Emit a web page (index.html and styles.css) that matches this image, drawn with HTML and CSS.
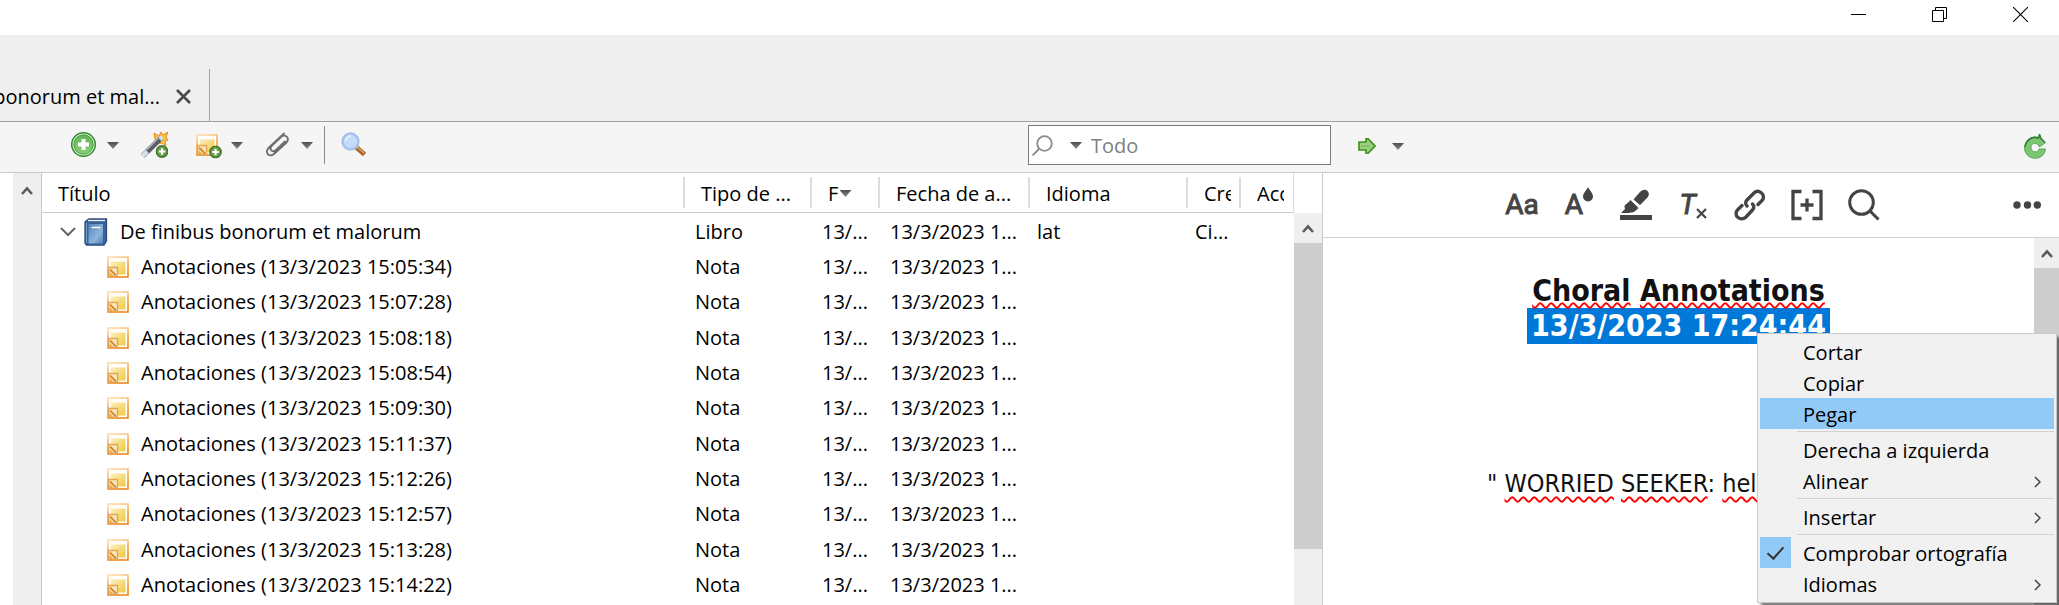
FILE: index.html
```html
<!DOCTYPE html>
<html lang="es">
<head>
<meta charset="utf-8">
<title>De finibus bonorum et malorum</title>
<link rel="stylesheet" href="styles.css">
</head>
<body>
<svg class="defs" aria-hidden="true">
  <defs>
    <linearGradient id="g-note" x1="0" y1="0" x2="1" y2="1"><stop offset="0" stop-color="#fbefc2"/><stop offset="1" stop-color="#efc93c"/></linearGradient>
    <linearGradient id="g-edge" x1="0.2" y1="0" x2="0.5" y2="1"><stop offset="0" stop-color="#fbdcae"/><stop offset="0.5" stop-color="#f6a545"/><stop offset="1" stop-color="#f0861a"/></linearGradient>
    <linearGradient id="g-book" x1="0" y1="0" x2="1" y2="1"><stop offset="0" stop-color="#4f82b8"/><stop offset="0.6" stop-color="#8db4dd"/><stop offset="1" stop-color="#4d7fb8"/></linearGradient>
    <linearGradient id="g-green" x1="0" y1="0" x2="0" y2="1"><stop offset="0" stop-color="#63b558"/><stop offset="1" stop-color="#86d072"/></linearGradient>
    <linearGradient id="g-caret" x1="0" y1="0" x2="0" y2="1"><stop offset="0" stop-color="#4e4e4e"/><stop offset="1" stop-color="#8a8a8a"/></linearGradient>
    <symbol id="i-note" viewBox="0 0 22 22">
      <rect x="1" y="1" width="20" height="20" fill="#fffdf8" stroke="url(#g-edge)" stroke-width="1.600"/>
      <rect x="4" y="5.500" width="14.500" height="13" fill="url(#g-note)"/>
      <path d="M1.500 11.500H10.500V20.500H1.500z" fill="#fbe6bb" stroke="#e5a450" stroke-width="1.300"/>
      <path d="M3 13.500l6 6" stroke="#d08a34" stroke-width="1.800"/>
      <path d="M2.500 16l4 4h-4z" fill="#e9a84e"/>
    </symbol>
    <symbol id="i-plus" viewBox="0 0 12 12">
      <circle cx="6" cy="6" r="5.300" fill="#6a9d48" stroke="#3d742a" stroke-width="1.200"/>
      <path d="M6 3v6M3 6h6" stroke="#fff" stroke-width="2"/>
    </symbol>
    <symbol id="i-caret" viewBox="0 0 12 7"><path d="M0 0h12L6 7z" fill="url(#g-caret)"/></symbol>
    <symbol id="i-up" viewBox="0 0 12 9"><path d="M1 8l5-5.500L11 8" fill="none" stroke="#5a5a5a" stroke-width="2.600"/></symbol>
    <symbol id="i-sub" viewBox="0 0 7 12"><path d="M1 1l5 5-5 5" fill="none" stroke="#444" stroke-width="1.500"/></symbol>
  </defs>
</svg>

<header class="titlebar">
  <button aria-label="Minimizar"><svg width="15" height="15"><path d="M0 7.500h15" stroke="#000"/></svg></button>
  <button aria-label="Restaurar"><svg width="15" height="15"><path d="M3.500 3V.5h11v11H12M.5 3.500h11v11H.5z" fill="none" stroke="#000"/></svg></button>
  <button aria-label="Cerrar"><svg width="15" height="15"><path d="M0 0l15 15M15 0L0 15" stroke="#000" stroke-width="1.100"/></svg></button>
</header>

<nav class="tabs">
  <div class="tab">
    <span class="tab-name">bonorum et mal...</span>
    <button aria-label="Cerrar pestaña"><svg width="15" height="15"><path d="M1 1l13 13M14 1L1 14" stroke="#4a4a4a" stroke-width="2.600"/></svg></button>
  </div>
</nav>

<div class="toolbar">
  <div class="tools-left">
    <button class="split" aria-label="Nuevo elemento">
      <svg width="28" height="28" viewBox="0 0 28 28"><circle cx="13.500" cy="13.500" r="11.800" fill="#dff3da" stroke="#2f8a2c" stroke-width="1.500"/><circle cx="13.500" cy="13.500" r="9.700" fill="url(#g-green)" stroke="#43993c"/><path d="M13.500 8v11M8 13.500h11" stroke="#fff" stroke-width="4"/></svg>
      <svg width="12" height="7"><use href="#i-caret"/></svg>
    </button>
    <button class="wand" aria-label="Añadir por identificador">
      <svg width="28" height="28" viewBox="0 0 28 28"><path d="M14 2l5 3 2-4 2 3 5-3-2 5 2 3-3 1 1 5-4-3-4 1-2-4-1-1z" fill="#fbc23d" stroke="#ef8b1c"/><path d="M2.500 25L22 6" stroke="#96a5b0" stroke-width="5.500"/><path d="M7.500 20.500L19.500 8.500" stroke="#5c5d61" stroke-width="4.800"/><path d="M2.500 25L7 20.500M20 8l2.200-2.200" stroke="#d3e2ec" stroke-width="4"/><path d="M6.500 19L18 7.500" stroke="#b5b8bb" stroke-width="1.200"/><use href="#i-plus" x="15.500" y="14" width="13" height="13"/></svg>
    </button>
    <button class="split add-note" aria-label="Nueva nota">
      <svg width="28" height="28" viewBox="0 0 28 28"><use href="#i-note" x="2" y="3" width="22" height="22"/><use href="#i-plus" x="15" y="14.500" width="13" height="13"/></svg>
      <svg width="12" height="7"><use href="#i-caret"/></svg>
    </button>
    <button class="split" aria-label="Añadir adjunto">
      <svg width="28" height="28" viewBox="0 0 28 28" fill="none" stroke="#6e6e6e" stroke-width="1.900" stroke-linecap="round"><path d="M20 2.500L5 16.500C-.5 22 6 27 10.500 22.500L22 12c5-5-1-9.500-5-6L8 14.500c-4 4.500 1 7.500 4 4.500l9-8.500"/></svg>
      <svg width="12" height="7"><use href="#i-caret"/></svg>
    </button>
    <span class="rule"></span>
    <button class="find" aria-label="Búsqueda avanzada">
      <svg width="28" height="28" viewBox="0 0 28 28"><path d="M17 16l8.500 7.500" stroke="#a8682c" stroke-width="5"/><path d="M18 16l7 6" stroke="#dba868" stroke-width="1.500"/><circle cx="11.500" cy="10.500" r="8" fill="#c3dcfa" stroke="#a4c1ec" stroke-width="2.400"/><path d="M7 10a5 5 0 0 1 5-5" fill="none" stroke="#e4f0fd" stroke-width="2"/></svg>
    </button>
    <label class="search">
      <svg width="21" height="21" viewBox="0 0 21 21" fill="none" stroke="#8b8b8b" stroke-width="1.800"><circle cx="12.500" cy="8.500" r="7.300"/><path d="M7 14l-6.500 6.500"/></svg>
      <svg width="12" height="7"><use href="#i-caret"/></svg>
      <input type="text" placeholder="Todo" aria-label="Buscar">
    </label>
  </div>
  <div class="tools-right">
    <button class="split locate" aria-label="Localizar">
      <svg width="18" height="16" viewBox="0 0 18 16"><path d="M1 4h7V1l2-.300L17 8l-7 7.300L8 15v-3H1z" fill="#9bd082" stroke="#43911f" stroke-width="1.700"/><path d="M3 8h9" stroke="#6cae4e"/></svg>
      <svg width="12" height="7"><use href="#i-caret"/></svg>
    </button>
    <button aria-label="Sincronizar">
      <svg width="22" height="25" viewBox="0 0 22 25"><path d="M15.500 0l1 3.500 5 5-6 4.500-2-3C9 8 6.500 11 7 14c1 5 7 5 8 1h6.500C20 28 1 27 .5 14 .5 6 8 1 14.500 3.500z" fill="#7cc573" stroke="#58ab57"/><path d="M1 13C2 6 8 2 14.500 4l1-3.500 1.500 4 4 4" fill="none" stroke="#2f7d36" stroke-width="1.400"/></svg>
    </button>
  </div>
</div>

<main class="panes">
  <aside class="collections"><div class="gutter"><svg width="12" height="9"><use href="#i-up"/></svg></div></aside>

  <section class="items">
    <table>
      <colgroup><col><col class="c-type"><col class="c-date"><col class="c-added"><col class="c-lang"><col class="c-author"><col class="c-access"></colgroup>
      <thead><tr><th>Título</th><th>Tipo de ...</th><th><span class="sorted">F<svg width="13" height="7" viewBox="0 0 12 7"><use href="#i-caret"/></svg></span></th><th>Fecha de a...</th><th>Idioma</th><th><span class="cut">Creador</span></th><th><span class="cut">Accedido</span></th></tr></thead>
      <tbody>
        <tr><td><span class="book"><svg width="16" height="10" viewBox="0 0 16 10"><path d="M1 1l7 7 7-7" fill="none" stroke="#666" stroke-width="2"/></svg><svg width="24" height="28" viewBox="0 0 24 28"><path d="M2 3l3-2h17.500v22L20 27H2.500L1 25V4z" fill="#3c6296" stroke="#2c4f82" stroke-width="1.300"/><path d="M4 2.500h17" stroke="#e9eff6" stroke-width="1.300"/><path d="M4 5.500h15.500V26H4z" fill="url(#g-book)" stroke="#35609a"/><path d="M2.500 5v20" stroke="#7ba0ca"/><path d="M7.500 9.500h9" stroke="#fff" stroke-width="1.400"/></svg>De finibus bonorum et malorum</span></td><td>Libro</td><td>13/...</td><td>13/3/2023 1...</td><td>lat</td><td>Ci...</td><td></td></tr>
        <tr><td><span class="note"><svg width="22" height="22"><use href="#i-note"/></svg>Anotaciones (13/3/2023 15:05:34)</span></td><td>Nota</td><td>13/...</td><td>13/3/2023 1...</td><td></td><td></td><td></td></tr>
        <tr><td><span class="note"><svg width="22" height="22"><use href="#i-note"/></svg>Anotaciones (13/3/2023 15:07:28)</span></td><td>Nota</td><td>13/...</td><td>13/3/2023 1...</td><td></td><td></td><td></td></tr>
        <tr><td><span class="note"><svg width="22" height="22"><use href="#i-note"/></svg>Anotaciones (13/3/2023 15:08:18)</span></td><td>Nota</td><td>13/...</td><td>13/3/2023 1...</td><td></td><td></td><td></td></tr>
        <tr><td><span class="note"><svg width="22" height="22"><use href="#i-note"/></svg>Anotaciones (13/3/2023 15:08:54)</span></td><td>Nota</td><td>13/...</td><td>13/3/2023 1...</td><td></td><td></td><td></td></tr>
        <tr><td><span class="note"><svg width="22" height="22"><use href="#i-note"/></svg>Anotaciones (13/3/2023 15:09:30)</span></td><td>Nota</td><td>13/...</td><td>13/3/2023 1...</td><td></td><td></td><td></td></tr>
        <tr><td><span class="note"><svg width="22" height="22"><use href="#i-note"/></svg>Anotaciones (13/3/2023 15:11:37)</span></td><td>Nota</td><td>13/...</td><td>13/3/2023 1...</td><td></td><td></td><td></td></tr>
        <tr><td><span class="note"><svg width="22" height="22"><use href="#i-note"/></svg>Anotaciones (13/3/2023 15:12:26)</span></td><td>Nota</td><td>13/...</td><td>13/3/2023 1...</td><td></td><td></td><td></td></tr>
        <tr><td><span class="note"><svg width="22" height="22"><use href="#i-note"/></svg>Anotaciones (13/3/2023 15:12:57)</span></td><td>Nota</td><td>13/...</td><td>13/3/2023 1...</td><td></td><td></td><td></td></tr>
        <tr><td><span class="note"><svg width="22" height="22"><use href="#i-note"/></svg>Anotaciones (13/3/2023 15:13:28)</span></td><td>Nota</td><td>13/...</td><td>13/3/2023 1...</td><td></td><td></td><td></td></tr>
        <tr><td><span class="note"><svg width="22" height="22"><use href="#i-note"/></svg>Anotaciones (13/3/2023 15:14:22)</span></td><td>Nota</td><td>13/...</td><td>13/3/2023 1...</td><td></td><td></td><td></td></tr>
      </tbody>
    </table>
    <div class="items-side">
      <div class="picker"></div>
      <div class="scroll"><div class="scroll-up"><svg width="12" height="9"><use href="#i-up"/></svg></div><div class="thumb"></div></div>
    </div>
  </section>

  <section class="editor">
    <div class="format">
      <div class="format-group">
        <button class="glyph" aria-label="Formato de texto">Aa</button>
        <button class="glyph" aria-label="Color de texto"><span>A</span><svg class="drop" width="10" height="15" viewBox="0 0 10 15"><path d="M5 0c1.500 3.500 5 6 5 9.500a5 5 0 0 1-10 0C0 6 3.500 3.500 5 0z" fill="#444"/></svg></button>
        <button aria-label="Resaltar"><svg width="32" height="32" viewBox="0 0 32 32" fill="#444"><path d="M0 26h32v5H0zM1 24l4-4-.500-2c0-3 3-3 6-7l8 8c-3 3-5 5-8 4.500L9 24z"/><path d="M12 10l6-7c3-3.500 6-3.500 8-1.500s2 5-1.500 8l-6 6z" transform="translate(1.500 .5)"/></svg></button>
        <button class="glyph" aria-label="Borrar formato"><i>T</i><svg class="clear" width="11" height="11" viewBox="0 0 11 11"><path d="M1 1l9 9M10 1l-9 9" stroke="#444" stroke-width="2.200"/></svg></button>
        <button aria-label="Enlace"><svg width="32" height="32" viewBox="0 0 32 32" fill="none" stroke="#444" stroke-width="3.400" stroke-linecap="round"><path d="M13 17c-2-2-1.500-4.500 0-6l7-7c2-2 5-2 7.500 0s2.500 5.500.5 7.500l-4 4"/><path d="M18.500 15c2 2 1.500 4.500 0 6l-6.500 7c-2 2-5.500 2.500-8 .5S1.500 23 3.500 21l4.500-4.500"/></svg></button>
        <button aria-label="Insertar cita"><svg width="32" height="32" viewBox="0 0 32 32" fill="none" stroke="#444" stroke-width="3.300"><path d="M10.500 2.500H2v27h8.500M21.500 2.500H30v27h-8.500M16 9.500v13M9.500 16h13"/></svg></button>
        <button aria-label="Buscar en la nota"><svg width="32" height="32" viewBox="0 0 32 32" fill="none" stroke="#444" stroke-width="3"><circle cx="13.500" cy="13.500" r="11.800"/><path d="M22 22l8.500 8.500"/></svg></button>
      </div>
      <button class="more" aria-label="Más"><svg width="28" height="8" fill="#444"><circle cx="4" cy="4" r="3.700"/><circle cx="14.500" cy="4" r="3.700"/><circle cx="24.300" cy="4" r="3.700"/></svg></button>
    </div>
    <div class="page">
      <article class="doc">
        <h1><mark>13/3/2023 17:24:44</mark><span class="heading"><span class="typo">Choral</span> <span class="typo">Annotations</span></span></h1>
        <p>" <span class="typo">WORRIED</span> <span class="typo">SEEKER</span>: <span class="typo">help</span></p>
      </article>
      <div class="scroll doc-scroll"><div class="scroll-up"><svg width="12" height="9"><use href="#i-up"/></svg></div><div class="thumb"></div></div>
    </div>
    <div class="menu" role="menu">
      <button role="menuitem">Cortar</button>
      <button role="menuitem">Copiar</button>
      <button role="menuitem" class="active">Pegar</button>
      <hr>
      <button role="menuitem">Derecha a izquierda</button>
      <button role="menuitem">Alinear<svg width="7" height="12"><use href="#i-sub"/></svg></button>
      <hr>
      <button role="menuitem">Insertar<svg width="7" height="12"><use href="#i-sub"/></svg></button>
      <hr>
      <label class="check"><input type="checkbox" checked><span>Comprobar ortografía</span></label>
      <button role="menuitem">Idiomas<svg width="7" height="12"><use href="#i-sub"/></svg></button>
    </div>
  </section>
</main>
</body>
</html>
```

FILE: styles.css
```css
* { box-sizing: border-box; }
body {
  margin: 0;
  height: 100vh;
  display: flex;
  flex-direction: column;
  overflow: hidden;
  background: #fff;
  color: #000;
  font: 20px/28px "Open Sans", "Noto Sans", sans-serif;
}
svg { display: block; flex: none; }
.defs { position: absolute; width: 0; height: 0; }
button {
  padding: 0;
  border: 0;
  background: none;
  color: inherit;
  font: inherit;
}

.titlebar {
  display: flex;
  justify-content: flex-end;
  gap: 66px;
  height: 35px;
  padding: 7px 31px 0 0;
  align-items: flex-start;
}
.tabs {
  display: flex;
  align-items: flex-end;
  height: 87px;
  background: #efefef;
  border-bottom: 1px solid #a0a0a0;
}
.tab {
  display: flex;
  align-items: center;
  justify-content: flex-end;
  gap: 16px;
  width: 210px;
  height: 52px;
  padding: 3px 18px 0 0;
  border-right: 1px solid #a0a0a0;
  overflow: hidden;
}
.tab-name { white-space: nowrap; }

.toolbar {
  display: grid;
  grid-template-columns: 1331fr 728fr;
  padding: 3px 0 7px;
  background: #f5f5f5;
  border-bottom: 1px solid #cbcbcb;
}
.tools-left, .tools-right { display: flex; align-items: center; }
.tools-left { padding-left: 70px; }
.tools-right { justify-content: space-between; padding: 2px 13px 0 27px; }
.split { display: flex; align-items: center; gap: 9px; }
.split + .split, .wand { margin-left: 21px; }
.add-note { margin-left: 26px; }
.locate { gap: 16px; }
.rule { width: 1px; height: 38px; margin: 0 14px 0 11px; background: #8c8c8c; }
.search {
  display: flex;
  align-items: center;
  gap: 17px;
  width: 303px;
  height: 40px;
  margin-left: auto;
  padding-left: 3px;
  border: 1px solid #7a7a7a;
  background: #fff;
}
.search input {
  flex: 1;
  min-width: 0;
  margin-left: -8px;
  padding: 2px 0 0;
  border: 0;
  outline: 0;
  background: none;
  font: inherit;
}
.search input::placeholder { color: #808080; opacity: 1; }

.panes {
  flex: 1;
  min-height: 0;
  display: grid;
  grid-template-columns: 42px 1281fr 736fr;
}
.collections { padding-left: 13px; border-right: 1px solid #cbcbcb; }
.gutter { height: 100%; padding: 13px 0 0 8px; background: #efefef; }

.items {
  display: flex;
  min-width: 0;
  overflow: hidden;
  border-right: 1px solid #cbcbcb;
}
table {
  flex: 1;
  min-width: 0;
  align-self: flex-start;
  table-layout: fixed;
  border-collapse: separate;
  border-spacing: 0;
}
.c-type { width: 127px; }
.c-date { width: 68px; }
.c-added { width: 150px; }
.c-lang { width: 158px; }
.c-author { width: 53px; }
.c-access { width: 55px; }
th, td {
  padding: 0 0 0 12px;
  text-align: left;
  font-weight: 400;
  white-space: nowrap;
  overflow: hidden;
}
th {
  height: 40px;
  padding: 2px 0 0 18px;
  border-bottom: 1px solid #cbcbcb;
  background: linear-gradient(#dcdcdc, #dcdcdc) 0 4px / 2px 31px no-repeat;
}
th:first-child { padding-left: 16px; background: none; }
th:last-child { border-right: 1px solid #dcdcdc; }
td { height: 35px; padding-top: 2px; }
tr:nth-child(3n) td { height: 36px; }
td:first-child { padding-left: 18px; }
td:nth-child(n+5) { padding-left: 9px; }
.cut { display: block; width: 27px; overflow: hidden; }
.sorted, .book, .note { display: flex; align-items: center; }
.sorted svg { margin-left: 1px; }
.book { gap: 8px; }
.book svg + svg { margin-right: 4px; }
.note { gap: 12px; padding-left: 47px; }
.items-side { display: flex; flex-direction: column; width: 28px; }
.picker { height: 40px; }
.scroll {
  flex: 1;
  display: flex;
  flex-direction: column;
  background: #efefef;
}
.scroll-up {
  display: grid;
  place-items: center;
  height: 30px;
}
.thumb { flex: 0 0 78%; background: #cdcdcd; }

.editor { position: relative; display: flex; flex-direction: column; min-width: 0; }
.format {
  display: grid;
  grid-template-columns: 1fr auto 1fr;
  align-items: center;
  height: 65px;
  border-bottom: 1px solid #d4d4d4;
}
.format-group { grid-column: 2; display: flex; gap: 17px; margin-left: 4px; }
.format-group button {
  display: flex;
  align-items: center;
  justify-content: center;
  width: 40px;
  height: 36px;
}
.format-group .glyph {
  color: #444;
  font: 400 28px/36px "Liberation Sans Narrow", Roboto, sans-serif;
  -webkit-text-stroke: 1px #444;
}
.drop { align-self: flex-start; }
.clear { align-self: flex-end; margin-bottom: 4px; }
.more { justify-self: end; margin-right: 18px; }

.page { flex: 1; min-height: 0; display: flex; }
.doc {
  flex: 1;
  min-width: 0;
  padding-top: 36px;
  color: #111;
  font-family: "DejaVu Sans Condensed", "DejaVu Sans", sans-serif;
}
/* The selected line is painted first so the spelling marks above it stay visible. */
.doc h1 {
  display: flex;
  flex-direction: column-reverse;
  align-items: center;
  margin: 0;
  font-size: 30px;
  line-height: 34px;
  font-weight: 700;
}
.heading { position: relative; }
.doc mark { background: #0078d7; color: #fff; padding: 0 4px; line-height: 36px; }
.doc p {
  margin: 122px 0 0 164px;
  font-size: 25px;
  line-height: 36px;
  white-space: nowrap;
}
.typo {
  text-decoration: underline wavy #f00 2px;
  text-decoration-skip-ink: none;
  text-underline-offset: 4px;
}
.heading .typo { text-underline-offset: 1px; }
.doc-scroll { flex: 0 0 25px; }
.doc-scroll .thumb { flex: 1; }

.menu {
  position: absolute;
  top: 160px;
  right: 2px;
  width: 300px;
  padding: 2px 2px 3px;
  border: 1px solid #c8c8c8;
  background: #f1f1f1;
  box-shadow: 4px 4px 3px rgba(0, 0, 0, 0.5);
}
.menu button, .check {
  display: flex;
  align-items: center;
  justify-content: space-between;
  width: 100%;
  height: 31px;
  padding: 2px 13px 0 43px;
}
.menu .active { background: #91c9f7; }
.menu hr { height: 1px; margin: 2px 0 2px 37px; border: 0; background: #d2d2d2; }
.menu .check { justify-content: flex-start; gap: 12px; padding: 0; }
.check span { padding-top: 2px; }
.check input {
  appearance: none;
  display: grid;
  place-items: center;
  width: 31px;
  height: 31px;
  margin: 0;
  background: #91c9f7;
}
.check input::before {
  content: "";
  width: 7px;
  height: 14px;
  border: solid #333;
  border-width: 0 2px 2px 0;
  transform: translateY(-2px) rotate(42deg);
}
```
